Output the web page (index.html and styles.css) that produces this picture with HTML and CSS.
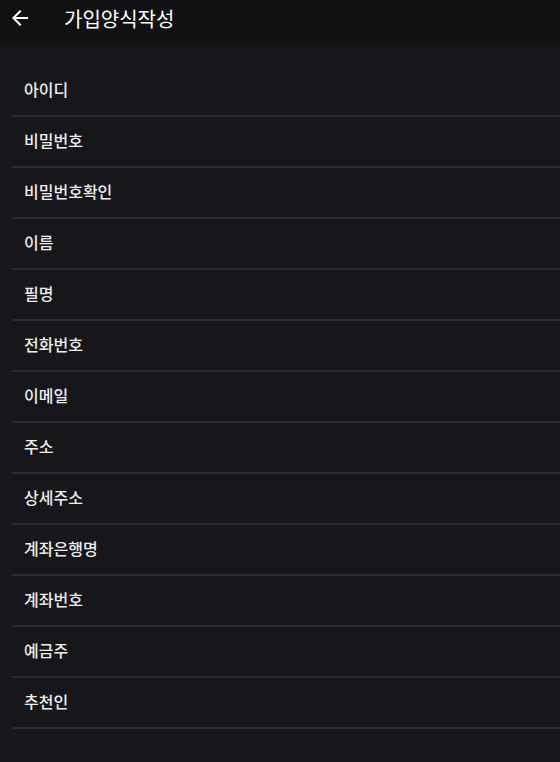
FILE: index.html
```html
<!DOCTYPE html>
<html lang="ko">
<head>
    <meta charset="UTF-8">
    <meta name="viewport" content="width=device-width, initial-scale=1.0">
    <title>가입양식작성</title>
    <link rel="stylesheet" href="styles.css">
</head>
<body>
    <div class="header">
        <span class="back">
            <svg width="24" height="24" viewBox="0 0 24 24"><path fill="#fff" d="M20 11H7.83l5.59-5.59L12 4l-8 8 8 8 1.41-1.41L7.83 13H20v-2z"/></svg>
        </span>
        <h1>가입양식작성</h1>
    </div>
    <div class="form">
        <div class="row">아이디</div>
        <div class="row">비밀번호</div>
        <div class="row">비밀번호확인</div>
        <div class="row">이름</div>
        <div class="row">필명</div>
        <div class="row">전화번호</div>
        <div class="row">이메일</div>
        <div class="row">주소</div>
        <div class="row">상세주소</div>
        <div class="row">계좌은행명</div>
        <div class="row">계좌번호</div>
        <div class="row">예금주</div>
        <div class="row">추천인</div>
    </div>
</body>
</html>
```

FILE: styles.css
```css
body {
    margin: 0;
    padding: 0;
    background-color: #18171c;
    font-family: "Noto Sans CJK KR", "Noto Sans", sans-serif;
    color: #ededed;
    height: 100vh;
    overflow: hidden;
}

.header {
    height: 42px;
    background-color: #111113;
    display: flex;
    align-items: center;
    box-shadow: 0 2px 6px rgba(0, 0, 0, 0.5);
    position: relative;
}

.back {
    display: flex;
    width: 24px;
    height: 24px;
    margin-left: 8px;
    margin-top: -6px;
}

.header h1 {
    margin: 0 0 0 32px;
    font-size: 20px;
    font-weight: normal;
    color: #fff;
    margin-top: -6px;
}

.form {
    padding-top: 24px;
    margin-left: 12px;
}

.row {
    height: 46px;
    padding-bottom: 3px;
    border-bottom: 2px solid #2c2b30;
    background-color: #17161b;
    display: flex;
    align-items: center;
    padding-left: 12px;
    font-size: 16px;
    font-weight: 500;
}
```
